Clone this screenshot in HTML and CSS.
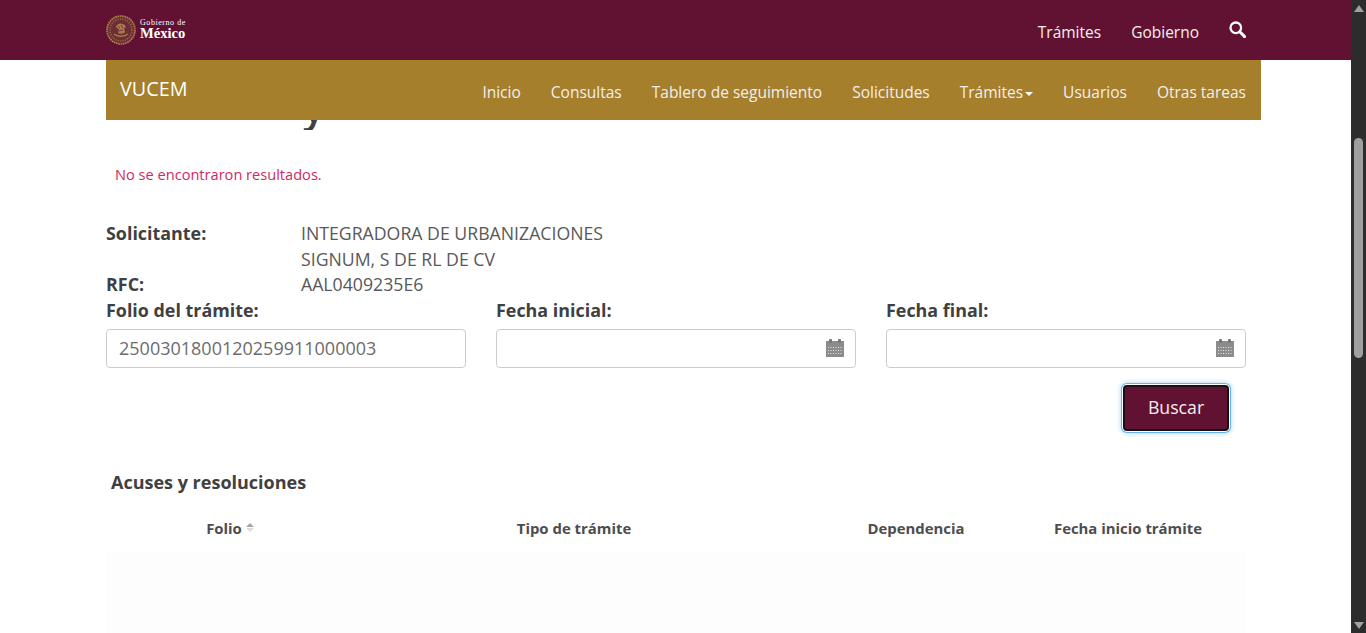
FILE: index.html
```html
<!DOCTYPE html>
<html lang="es">
  <head>
    <meta charset="UTF-8" />
    <meta name="viewport" content="width=device-width, initial-scale=1.0" />
    <title>VUCEM</title>
    <link rel="stylesheet" href="styles.css">
  </head>
  <body>
    <div class="page">
      <header class="topBar">
        <a class="logo" href="#">
          <svg class="emblem" width="30" height="30" viewBox="0 0 30 30">
            <circle cx="15" cy="15" r="14" fill="#6d2d36" stroke="#b5874f" stroke-width="1.6" stroke-dasharray="1.6 0.7"/>
            <circle cx="15" cy="15" r="11" fill="none" stroke="#96693f" stroke-width="1.6" stroke-dasharray="1.2 1.2"/>
            <path d="M10 11c2-2 4-3 6-2 2 0 3 1 4 3-1 1-2 1-2 1l1 4c-1 2-5 2-7 1l1-4c-1 0-3-1-3-3z" fill="#a87c48"/>
            <path d="M8 19c3 3 10 3 14 0" fill="none" stroke="#a87c48" stroke-width="1.4"/>
            <path d="M12 11l2 2M15 10l2 3M13 16l4-1" stroke="#6d2d36" stroke-width=".9"/>
          </svg>
          <span class="logoText">
            <span class="logoSmall">Gobierno de</span>
            <span class="logoBig">México</span>
          </span>
        </a>
        <nav class="topLinks">
          <a href="#">Trámites</a>
          <a href="#">Gobierno</a>
          <a href="#" class="searchLink" aria-label="Buscar">
            <svg width="17" height="17" viewBox="0 0 17 17">
              <circle cx="6.8" cy="6.8" r="5.3" fill="none" stroke="#fff" stroke-width="2.3"/>
              <path d="M10.8 10.8l4.8 4.8" stroke="#fff" stroke-width="3" stroke-linecap="round"/>
            </svg>
          </a>
        </nav>
      </header>

      <div class="container">
        <nav class="navBar">
          <a class="brand" href="#">VUCEM</a>
          <div class="navLinks">
            <a href="#">Inicio</a>
            <a href="#">Consultas</a>
            <a href="#">Tablero de seguimiento</a>
            <a href="#">Solicitudes</a>
            <a href="#">Trámites<span class="caret"></span></a>
            <a href="#">Usuarios</a>
            <a href="#">Otras tareas</a>
          </div>
        </nav>

        <div class="titleClip"><h1>y</h1></div>

        <p class="message">No se encontraron resultados.</p>

        <div class="infoRow solicitanteRow">
          <strong>Solicitante:</strong>
          <span class="infoValue">INTEGRADORA DE URBANIZACIONES SIGNUM, S DE RL DE CV</span>
        </div>
        <div class="infoRow rfcRow">
          <strong>RFC:</strong>
          <span class="infoValue">AAL0409235E6</span>
        </div>

        <form class="filters">
          <div class="field">
            <label for="folio">Folio del trámite:</label>
            <div class="inputBox">
              <input id="folio" type="text" value="2500301800120259911000003" />
            </div>
          </div>
          <div class="field">
            <label for="inicial">Fecha inicial:</label>
            <div class="inputBox">
              <input id="inicial" type="text" />
              <svg class="calendar" width="18" height="18" viewBox="0 0 18 18">
                <rect x="0" y="2" width="18" height="16" fill="#8c8c8c"/>
                <rect x="3" y="0" width="3" height="4" rx="1" fill="#777"/>
                <rect x="12" y="0" width="3" height="4" rx="1" fill="#777"/>
                <path d="M2 8.5h14M2 11.5h14M2 14.5h14" stroke="#e6e6e6" stroke-width="1" stroke-dasharray="1 1.5"/>
              </svg>
            </div>
          </div>
          <div class="field">
            <label for="final">Fecha final:</label>
            <div class="inputBox">
              <input id="final" type="text" />
              <svg class="calendar" width="18" height="18" viewBox="0 0 18 18">
                <rect x="0" y="2" width="18" height="16" fill="#8c8c8c"/>
                <rect x="3" y="0" width="3" height="4" rx="1" fill="#777"/>
                <rect x="12" y="0" width="3" height="4" rx="1" fill="#777"/>
                <path d="M2 8.5h14M2 11.5h14M2 14.5h14" stroke="#e6e6e6" stroke-width="1" stroke-dasharray="1 1.5"/>
              </svg>
            </div>
          </div>
        </form>

        <div class="actions">
          <button class="button" type="button">Buscar</button>
        </div>

        <h2 class="sectionTitle">Acuses y resoluciones</h2>

        <div class="tableHead">
          <div class="sortCell">Folio<span class="sortIcon"><i class="up"></i><i class="down"></i></span></div>
          <div>Tipo de trámite</div>
          <div>Dependencia</div>
          <div class="lastCell">Fecha inicio trámite</div>
        </div>
        <div class="tableBody"></div>
      </div>
    </div>

    <div class="scrollBar">
      <span class="arrowUp"></span>
      <span class="thumb"></span>
      <span class="arrowDown"></span>
    </div>
  </body>
</html>
```

FILE: styles.css
```css
html, body {
  height: 100%;
  margin: 0;
}

body {
  display: flex;
  overflow: hidden;
  background: #fff;
  color: #404041;
  font-family: "Open Sans", sans-serif;
  font-size: 15.5px;
}

a {
  color: #fff;
  text-decoration: none;
}

.page {
  flex: 1;
  min-width: 0;
}

.topBar {
  display: flex;
  align-items: center;
  justify-content: space-between;
  height: 60px;
  padding: 0 105px 0 106px;
  background: #611232;
}

.logo {
  display: flex;
  align-items: center;
  gap: 4px;
  margin-top: -1px;
}

.logoText {
  display: flex;
  flex-direction: column;
  font-family: "Liberation Serif", serif;
}

.logoSmall {
  font-size: 8px;
  font-weight: 400;
  letter-spacing: 0.55px;
  line-height: 8px;
  white-space: nowrap;
}

.logoBig {
  font-size: 14.6px;
  font-weight: 700;
  line-height: 13px;
}

.topLinks {
  display: flex;
  align-items: center;
  gap: 30px;
  padding-top: 4px;
}

.topLinks a,
.navLinks a {
  color: #f4eeee;
}

.searchLink {
  display: flex;
  margin-top: -5px;
}

.container {
  width: 1155px;
  margin-left: 106px;
}

.navBar {
  display: flex;
  justify-content: space-between;
  height: 60px;
  background: #a57f2c;
}

.brand {
  padding: 14px 0 0 14px;
  font-size: 19.8px;
  line-height: 29px;
}

.navLinks {
  display: flex;
  gap: 30px;
  padding: 21px 15px 0 0;
  line-height: 22px;
}

.caret {
  display: inline-block;
  margin-left: 2px;
  vertical-align: middle;
  border-top: 4px solid #fff;
  border-left: 4px solid transparent;
  border-right: 4px solid transparent;
}

.titleClip {
  height: 10px;
  overflow: hidden;
  padding-left: 197px;
}

h1 {
  margin: -38px 0 0;
  font-size: 40px;
  line-height: 50px;
  font-weight: 600;
}

.message {
  margin: 34px 0 0 9px;
  color: #cf2a5f;
  font-size: 14.6px;
  line-height: 20px;
}

.infoRow {
  display: flex;
  font-size: 17.7px;
  line-height: 26px;
}

.infoRow strong {
  width: 195px;
  font-size: 17.9px;
  font-weight: 700;
}

.solicitanteRow {
  margin-top: 36px;
}

.infoValue {
  width: 320px;
  color: #58585a;
}

.rfcRow {
  line-height: 25px;
}

.filters {
  display: flex;
  gap: 30px;
}

.field {
  width: 360px;
}

.field label {
  display: block;
  margin-bottom: 6px;
  font-size: 17.9px;
  font-weight: 700;
  line-height: 26px;
}

.inputBox {
  display: flex;
  align-items: center;
  box-sizing: border-box;
  height: 39px;
  padding: 0 11px 0 12px;
  border: 1px solid #ccc;
  border-radius: 4px;
}

.inputBox input {
  flex: 1;
  min-width: 0;
  padding: 0 0 1px;
  border: 0;
  outline: 0;
  background: transparent;
  color: #6c6c6c;
  font-family: "Open Sans", sans-serif;
  font-size: 18px;
}

.calendar {
  margin-top: -2px;
}

.actions {
  display: flex;
  justify-content: flex-end;
  padding: 17px 32px 0 0;
}

.button {
  box-sizing: border-box;
  width: 106px;
  height: 46px;
  padding: 0 0 2px;
  border: 2px solid #17101a;
  border-radius: 4px;
  background: #611232;
  box-shadow: 0 0 0 1px #fff, 0 0 0 2px #64b1ee, 0 0 4px 3px rgba(100, 177, 238, 0.4);
  color: #f4eeee;
  font-family: "Open Sans", sans-serif;
  font-size: 17.7px;
}

.sectionTitle {
  margin: 39px 0 0 5px;
  font-size: 18px;
  line-height: 24px;
  font-weight: 700;
}

.tableHead {
  display: grid;
  grid-template-columns: 248px 440px 244px 208px;
  width: 1140px;
  margin-top: 14px;
  color: #4d4d4f;
  font-size: 14.9px;
  font-weight: 700;
  line-height: 40px;
  text-align: center;
}

.lastCell {
  padding-right: 28px;
}

.sortIcon {
  display: inline-flex;
  flex-direction: column;
  gap: 1px;
  margin-left: 4px;
  vertical-align: 7px;
}

.sortIcon i {
  display: block;
  border-left: 4px solid transparent;
  border-right: 4px solid transparent;
}

.sortIcon .up {
  border-bottom: 4px solid #a6a6a6;
}

.sortIcon .down {
  border-top: 4px solid #dcdcdc;
}

.tableBody {
  width: 1140px;
  height: 90px;
  margin-top: 4px;
  background: #fdfdfd;
}

.scrollBar {
  display: flex;
  flex-direction: column;
  align-items: center;
  flex: none;
  width: 15px;
  background: #2c2c2c;
}

.arrowUp {
  margin-top: 5px;
  border-bottom: 7px solid #a0a0a0;
  border-left: 5px solid transparent;
  border-right: 5px solid transparent;
}

.thumb {
  width: 9px;
  height: 220px;
  margin-top: 126px;
  border-radius: 5px;
  background: #9f9f9f;
}

.arrowDown {
  margin-top: auto;
  margin-bottom: 4px;
  border-top: 7px solid #a0a0a0;
  border-left: 5px solid transparent;
  border-right: 5px solid transparent;
}
```
